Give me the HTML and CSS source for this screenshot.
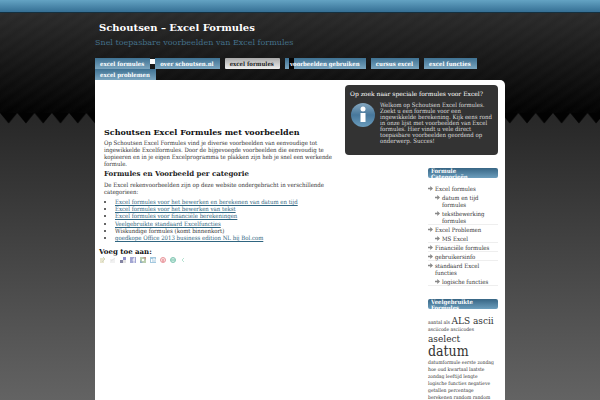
FILE: index.html
```html
<!DOCTYPE html>
<html lang="nl">
<head>
<meta charset="utf-8">
<meta name="viewport" content="width=device-width, initial-scale=1">
<title>Schoutsen - Excel Formules</title>
<link rel="stylesheet" href="styles.css">
</head>
<body>
<div class="topbar"></div>
<div class="backdrop">
  <svg class="zigzag" viewBox="0 0 600 11" preserveAspectRatio="none" aria-hidden="true">
    <defs><pattern id="teeth" width="17.28" height="11" patternUnits="userSpaceOnUse"><path d="M0 0L8.64 10.5L17.28 0Z" fill="#020202"/></pattern></defs>
    <rect width="600" height="11" fill="url(#teeth)"/>
  </svg>
</div>
<div class="page">
  <header class="masthead">
    <h1>Schoutsen – Excel Formules</h1>
    <p>Snel toepasbare voorbeelden van Excel formules</p>
  </header>
  <nav class="menu">
    <a href="#">excel formules</a>
    <a href="#" class="chip">over schoutsen.nl</a>
    <a href="#" class="current">excel formules</a>
    <a href="#" class="split">voorbeelden gebruiken</a>
    <a href="#">cursus excel</a>
    <a href="#">excel functies</a>
    <a href="#">excel problemen</a>
  </nav>
  <div class="content">
    <main class="article">
      <h2>Schoutsen Excel Formules met voorbeelden</h2>
      <p>Op Schoutsen Excel Formules vind je diverse voorbeelden van eenvoudige tot<br>ingewikkelde Excelformules. Door de bijgevoegde voorbeelden die eenvoudig te<br>kopieeren en in je eigen Excelprogramma te plakken zijn heb je snel een werkende<br>formule.</p>
      <h3>Formules en Voorbeeld per categorie</h3>
      <p>De Excel rekenvoorbeelden zijn op deze website ondergebracht in verschillende<br>categorieen:</p>
      <ul>
        <li><a href="#">Excel formules voor het bewerken en berekenen van datum en tijd</a></li>
        <li><a href="#">Excel formules voor het bewerken van tekst</a></li>
        <li><a href="#">Excel formules voor financiële berekeningen</a></li>
        <li><a href="#">Veelgebruikte standaard Excelfuncties</a></li>
        <li>Wiskundige formules (komt binnenkort)</li>
        <li><a href="#">goedkope Office 2013 business edition NL bij Bol.com</a></li>
      </ul>
      <h3 class="share-title">Voeg toe aan:</h3>
      <div class="share">
        <svg viewBox="0 0 8 8"><path d="M1 2h4v5H1z" fill="#e3dfc2"/><path d="M4 1l2 2-3 3" stroke="#c8ccae" fill="none"/></svg>
        <svg viewBox="0 0 8 8"><path d="M1 3h5v4H1z" fill="#eee"/><path d="M2 5l4-3" stroke="#ddd"/></svg>
        <svg viewBox="0 0 8 8"><path d="M4 1h3v3H4z" fill="#7474c0"/><path d="M1 4h3v3H1z" fill="#66668c"/><path d="M4 4h3v3H4z" fill="#ddd"/></svg>
        <svg viewBox="0 0 8 8"><path d="M1 1h6v6H1z" fill="#8c8fc8"/><path d="M6 2H5v5M3.500 4H6" stroke="#fff" fill="none"/></svg>
        <svg viewBox="0 0 8 8"><path d="M1 1h6v6H1z" fill="#a9c29b"/><path d="M4 1h3v3z" fill="#b57a70"/><path d="M1 4l3 3H1z" fill="#7699b5"/><path d="M3 3h2v2H3z" fill="#fff"/></svg>
        <svg viewBox="0 0 8 8"><path d="M1 1h6v6H1z" fill="#8dbbd8"/><path d="M2.500 3v3M4 6V3h2v3" stroke="#fff" fill="none"/></svg>
        <svg viewBox="0 0 8 8"><circle cx="4" cy="4" r="2.500" fill="#fbdcdc" stroke="#e37b84"/><path d="M4 3v3" stroke="#d8505c"/></svg>
        <svg viewBox="0 0 8 8"><circle cx="4" cy="4" r="2.500" fill="#c5eadb" stroke="#61b7a0"/><path d="M2 4h4" stroke="#61b7a0"/></svg>
        <svg viewBox="0 0 8 8"><path d="M5 2L3 4l2 2" stroke="#a5dbc8" fill="none"/></svg>
      </div>
    </main>
    <div class="side">
      <section class="notice">
        <h2>Op zoek naar speciale formules voor Excel?</h2>
        <div class="notice-body">
          <svg viewBox="0 0 26 26" aria-hidden="true"><defs><linearGradient id="ball" x2="0" y2="1"><stop offset="0" stop-color="#85a7bf"/><stop offset=".5" stop-color="#47779b"/><stop offset="1" stop-color="#6b9dbd"/></linearGradient></defs><circle cx="13" cy="13" r="12" fill="url(#ball)"/><circle cx="13" cy="7" r="2.500" fill="#fff"/><path d="M10.500 11h5v9h-5z" fill="#fff"/></svg>
          <p>Welkom op Schoutsen Excel formules.<br>Zoekt u een formule voor een<br>ingewikkelde berekening. Kijk eens rond<br>in onze lijst met voorbeelden van Excel<br>formules. Hier vindt u vele direct<br>toepasbare voorbeelden geordend op<br>onderwerp. Succes!</p>
        </div>
      </section>
      <aside class="widgets">
        <h2>Formule<br>Categorieën</h2>
        <ul class="cats">
          <li>Excel formules
            <ul><li>datum en tijd formules</li><li>tekstbewerking formules</li></ul></li>
          <li>Excel Problemen
            <ul><li>MS Excel</li></ul></li>
          <li>Financiële formules</li>
          <li>gebruikersinfo</li>
          <li>standaard Excel functies
            <ul><li>logische functies</li></ul></li>
        </ul>
        <h2>Veelgebruikte<br>Formules</h2>
        <p class="cloud">aantal als <span class="big">ALS ascii</span><br>asciicode asciicodes<br><span class="bigger">aselect</span><br><span class="huge">datum</span><br>datumformule eerste zondag<br>hoe oud kwartaal laatste<br>zondag leeftijd lengte<br>logische functies negatieve<br>getallen percentage<br>berekenen random random</p>
      </aside>
    </div>
  </div>
</div>
</body>
</html>
```
FILE: styles.css
```css
* { box-sizing: border-box; margin: 0; padding: 0; }
html { height: 100%; overflow: hidden; }
body {
  height: 100%;
  overflow: hidden;
  display: grid;
  grid-template-columns: 1fr min(410px, 100%) 1fr;
  grid-template-rows: 13px 1fr;
  font: 6px/7px "DejaVu Serif Condensed", "DejaVu Serif", serif;
  color: #333;
  background: linear-gradient(#222 0, #282828 120px, #636363 400px);
}
a { color: #2f6580; }
ul { list-style: none; }
.topbar { grid-column: 1 / -1; background: linear-gradient(#64a3c3, #356f94); border-bottom: 1px solid #15303f; }
.backdrop { grid-area: 2 / 1 / 3 / 4; }
.backdrop::before {
  content: "";
  display: block;
  height: 100px;
  background: repeating-linear-gradient(145deg, #ffffff04 0, transparent 5px, #ffffff04 10px), linear-gradient(#2b2b2b, #020202);
}
.zigzag { display: block; width: 100%; height: 11px; }
.page { grid-area: 2 / 2 / 3 / 3; display: flex; flex-direction: column; min-height: 0; }
.masthead { height: 45px; padding-top: 8px; font-family: "DejaVu Serif", serif; }
.masthead h1 { font-size: 10px; line-height: 14px; padding-left: 4px; color: #fff; }
.masthead p { font-size: 8px; line-height: 16px; color: #44708a; }
.menu { display: flex; flex-wrap: wrap; column-gap: 5px; height: 22px; align-content: start; }
.menu a {
  height: 11px;
  padding: 0 6px 0 5px;
  font-weight: bold;
  line-height: 11px;
  color: #fff;
  text-decoration: none;
  background: linear-gradient(#3f7293, #7aa5bf);
}
.menu .current { color: #222; background: linear-gradient(#aaa, #eee); border-radius: 1px; }
.menu .chip { position: relative; }
.menu .chip::before { content: ""; position: absolute; left: -5px; top: 1px; width: 5px; height: 5px; background: #fff; }
.menu .split { background: linear-gradient(90deg, transparent 4px, #050505 4px 9px, transparent 9px), linear-gradient(#3f7293, #7aa5bf); }
.content { flex: 1; display: flex; justify-content: space-between; background: #fff; border-top-right-radius: 5px; min-height: 0; }
.article { padding: 47px 0 0 9px; }
.article h2, .article h3 { font-family: "DejaVu Serif", serif; line-height: 10px; }
.article h2 { font-size: 8px; color: #111; margin-bottom: 2px; }
.article h3 { font-size: 7px; color: #222; margin: 2px 0; }
.article li { list-style: disc; margin-left: 11px; }
.article li:nth-child(3n) { margin-bottom: 1px; }
.article ul { color: #333; padding-top: 3px; }
.article .share-title { margin: 7px 0 0 -5px; line-height: 8px; color: #111; }
.share { display: flex; gap: 2px; margin-left: -5px; opacity: .8; }
.share svg { width: 8px; height: 8px; }
.side { width: 160px; padding: 5px 7px 0 0; }
.notice { height: 70px; padding: 5px; border-radius: 4px; background: #333; color: #ddd; }
.notice h2 { font: 6px/7px "DejaVu Serif", serif; color: #fff; }
.notice-body { display: flex; gap: 4px; padding-top: 5px; line-height: 6px; }
.notice-body svg { width: 26px; height: 26px; flex: none; }
.notice-body p { white-space: nowrap; }
.widgets { width: 70px; margin: 13px 0 0 auto; }
.widgets h2 {
  height: 10px;
  overflow: hidden;
  padding-left: 3px;
  border-radius: 2px;
  font-size: 6px;
  line-height: 6px;
  color: #fff;
  background: linear-gradient(#376584, #6c9ebd);
}
.cats { padding: 5px 0 14px; }
.cats li { position: relative; padding: 2px 0 0 7px; box-shadow: 0 1px #eee; }
.cats li::before {
  content: "";
  position: absolute;
  left: 0;
  top: 3px;
  width: 5px;
  height: 5px;
  background: #888;
  clip-path: polygon(0 35%, 45% 35%, 45% 0, 100% 50%, 45% 100%, 45% 65%, 0 65%);
}
.cats li li { box-shadow: none; }
.cloud { padding-top: 6px; white-space: nowrap; font-size: 5px; line-height: 7px; }
.big { font-size: 10px; line-height: 11px; }
.bigger { font-size: 10px; line-height: 11px; }
.huge { font-size: 14px; line-height: 15px; }
```
